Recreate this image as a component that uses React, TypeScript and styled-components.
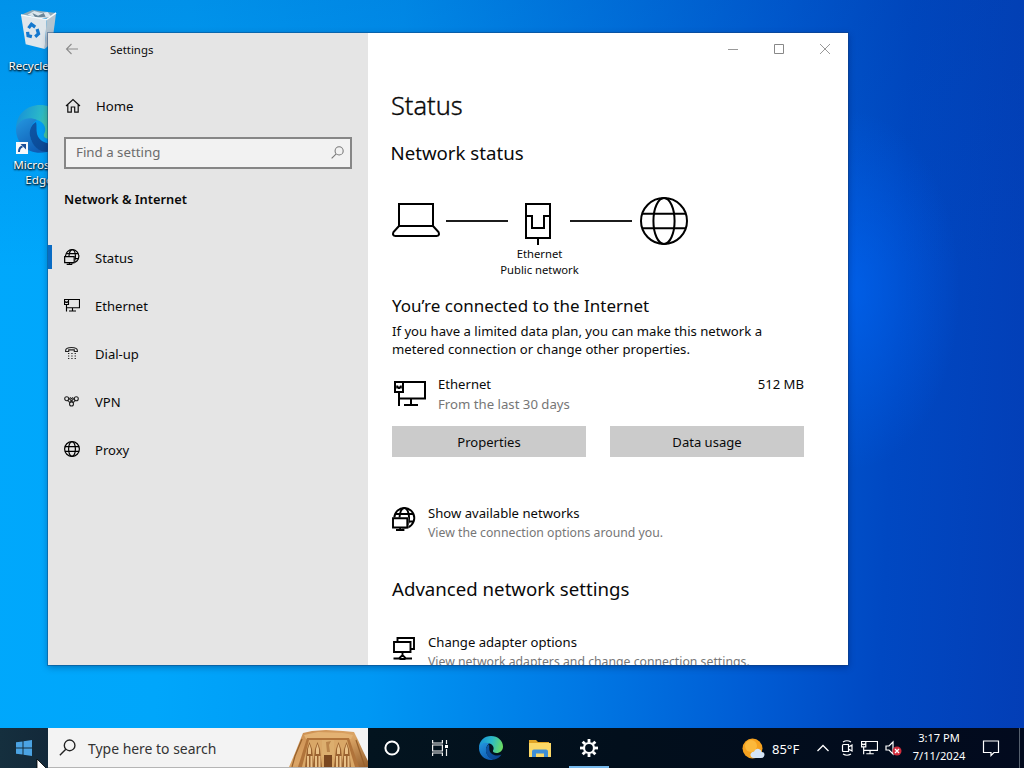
import React from 'react';
import styled, { createGlobalStyle } from 'styled-components';

const GlobalStyle = createGlobalStyle`
  * { box-sizing: border-box; }
  html, body { margin: 0; height: 100%; overflow: hidden; }
  body { font-family: "Noto Sans", "Open Sans", sans-serif; color: #0a0a0a; }
  svg { display: block; flex: none; }
`;

const Desktop = styled.div`
  position: relative;
  width: 1024px;
  height: 768px;
  overflow: hidden;
  display: flex;
  flex-direction: column;
  background:
    radial-gradient(ellipse 110px 180px at 850px 290px, rgba(0, 104, 250, 0.6), rgba(0, 90, 230, 0) 100%),
    linear-gradient(to bottom, rgba(0, 60, 160, 0.2), rgba(0, 60, 160, 0) 35%),
    linear-gradient(93deg, #00a8fc 0%, #00a6fb 18%, #0098f4 38%, #0078e4 58%, #005cd4 74%, #0048c2 86%, #033eb6 100%);
`;

const DesktopIcons = styled.div`
  flex: 1;
  display: flex;
  flex-direction: column;
  align-items: flex-start;
  padding: 8px 0 0 1px;
`;

const Shortcut = styled.div<{ $height: number }>`
  width: 76px;
  height: ${(p) => p.$height}px;
  display: flex;
  flex-direction: column;
  align-items: center;
`;

const ShortcutLabel = styled.div<{ $gap: number }>`
  margin-top: ${(p) => p.$gap}px;
  font-size: 11.6px;
  line-height: 15px;
  text-align: center;
  color: #fff;
  text-shadow: 0 1px 2px #000, 1px 1px 2px rgba(0, 0, 0, 0.8);
`;

const Window = styled.main`
  position: absolute;
  left: 48px;
  top: 33px;
  width: 800px;
  height: 632px;
  display: grid;
  grid-template-columns: 320px 480px;
  overflow: hidden;
  background: #fff;
  box-shadow: 0 0 0 1px rgba(20, 60, 110, 0.4), 0 2px 7px 0 rgba(0, 10, 50, 0.35);
`;

const Sidebar = styled.aside`
  background: #e5e5e5;
  display: flex;
  flex-direction: column;
`;

const SideTitle = styled.div`
  height: 32px;
  display: flex;
  align-items: center;
  padding: 1px 0 0 17px;
  gap: 31px;
  font-size: 11.4px;
`;

const HomeLink = styled.div`
  margin-top: 29px;
  height: 24px;
  display: flex;
  align-items: center;
  padding-left: 17px;
  gap: 15px;
  font-size: 13.2px;
  svg { margin-top: -1px; }
`;

const SearchField = styled.div`
  margin: 19px 16px 0;
  height: 32px;
  border: 2px solid #868686;
  background: #f2f2f2;
  color: #6c6c6c;
  display: flex;
  align-items: center;
  justify-content: space-between;
  padding: 0 6px 2px 10px;
  font-size: 13.3px;
`;

const SideHeading = styled.h2`
  margin: 20px 0 25px 16px;
  font-size: 12.85px;
  line-height: 20px;
  font-weight: 600;
`;

const NavItem = styled.div<{ $active?: boolean }>`
  height: 48px;
  display: flex;
  align-items: center;
  padding-left: 12px;
  gap: 15px;
  font-size: 13.05px;
  &::before {
    content: '';
    width: 4px;
    height: 24px;
    margin: -2px -15px 0 -12px;
    background: ${(p) => (p.$active ? '#0a6cc4' : 'transparent')};
  }
  svg { margin: -2px 0 0 12px; }
`;

const Content = styled.section`
  display: flex;
  flex-direction: column;
`;

const Controls = styled.div`
  height: 32px;
  flex: none;
  display: flex;
  justify-content: flex-end;
`;

const ControlButton = styled.div`
  width: 46px;
  display: flex;
  align-items: center;
  justify-content: center;
`;

const Body = styled.div`
  width: 412px;
  margin-left: 24px;
  display: flex;
  flex-direction: column;
`;

const Title = styled.h1`
  margin: 24px 0 0 -1px;
  font-size: 25.4px;
  line-height: 32px;
  font-weight: 300;
  -webkit-text-stroke: 0.35px #0a0a0a;
`;

const Heading = styled.h2<{ $top: number; $shift?: number }>`
  margin: ${(p) => p.$top}px 0 0 ${(p) => p.$shift ?? 0}px;
  font-size: 18.65px;
  line-height: 26px;
  font-weight: 400;
`;

const Diagram = styled.div`
  margin-top: 30px;
  height: 50px;
  display: flex;
  align-items: center;
`;

const Wire = styled.div<{ $left: number; $right: number }>`
  width: 62px;
  height: 2px;
  background: #1c1c1c;
  margin: 0 ${(p) => p.$right}px 0 ${(p) => p.$left}px;
`;

const DiagramLabel = styled.div`
  width: 295px;
  text-align: center;
  font-size: 11.25px;
  line-height: 16px;
`;

const Connected = styled.h3`
  margin: 16px 0 4px;
  font-size: 17px;
  line-height: 24px;
  font-weight: 400;
`;

const Paragraph = styled.p`
  margin: 0;
  font-size: 13.15px;
  line-height: 18px;
  white-space: nowrap;
`;

const UsageRow = styled.div`
  margin-top: 16px;
  height: 40px;
  display: flex;
  font-size: 13.1px;
  line-height: 20px;
  svg { margin: 7px 12px 0 2px; }
`;

const Stack = styled.div`
  flex: 1;
  white-space: nowrap;
`;

const Muted = styled.div<{ $small?: boolean }>`
  color: #767676;
  font-size: ${(p) => (p.$small ? '12.25px' : '13.2px')};
  line-height: 20px;
`;

const Buttons = styled.div`
  margin-top: 12px;
  display: grid;
  grid-template-columns: 194px 194px;
  gap: 24px;
`;

const Button = styled.div`
  height: 31px;
  background: #cbcbcb;
  display: flex;
  align-items: center;
  justify-content: center;
  padding-top: 1px;
  font-size: 13.05px;
`;

const LinkRow = styled.div<{ $top: number }>`
  margin-top: ${(p) => p.$top}px;
  height: 40px;
  display: flex;
  gap: 12px;
  font-size: 13.12px;
  line-height: 20px;
  svg { margin-top: 4px; }
`;

const Taskbar = styled.footer`
  height: 40px;
  flex: none;
  display: flex;
  color: #fff;
  background: linear-gradient(90deg, #152f3e 0, #13293a 48px, #03141f 368px, #020f1c 620px, #020a1e 1024px);
`;

const TaskButton = styled.div<{ $shift?: number; $active?: boolean }>`
  width: 48px;
  height: 40px;
  margin-left: ${(p) => p.$shift ?? 0}px;
  display: flex;
  align-items: center;
  justify-content: center;
  background: ${(p) => (p.$active ? 'linear-gradient(#76b9ed, #76b9ed) center bottom / 40px 2px no-repeat' : 'none')};
`;

const TaskSearch = styled.div`
  width: 320px;
  background: #f3f3f3;
  border-bottom: 1px solid #b5b5b5;
  color: #333;
  display: flex;
  align-items: center;
  padding-left: 11px;
  font-size: 13.95px;
  span { flex: 1; margin-left: 12px; padding-top: 2px; }
`;

const Tray = styled.div`
  margin-left: auto;
  display: flex;
  align-items: center;
`;

const Weather = styled.div`
  display: flex;
  align-items: center;
  gap: 7px;
  width: 75px;
  font-size: 13px;
  padding-top: 1px;
`;

const TrayIcons = styled.div`
  display: flex;
  align-items: center;
  gap: 7px;
  width: 94px;
  svg:first-child { margin-right: 4px; }
`;

const Clock = styled.div`
  width: 56px;
  text-align: center;
  font-size: 11.1px;
  line-height: 18px;
  padding-bottom: 2px;
`;

const ShowDesktop = styled.div`
  width: 5px;
  height: 40px;
  margin-left: 4px;
  border-left: 1px solid #56606e;
`;

const Cursor = styled.svg`
  position: absolute;
  left: 36px;
  top: 759px;
`;

const GlobeIcon = ({ size, stroke }: { size: number; stroke: number }) => {
  const c = size / 2;
  const r = c - stroke / 2;
  const dy = r * 0.31;
  const dx = Math.sqrt(r * r - dy * dy);
  return (
    <svg width={size} height={size} fill="none" stroke="#000" strokeWidth={stroke}>
      <circle cx={c} cy={c} r={r} />
      <ellipse cx={c} cy={c} rx={r * 0.46} ry={r} />
      <path d={`M${c - dx} ${c - dy}H${c + dx}M${c - dx} ${c + dy}H${c + dx}`} />
    </svg>
  );
};

const GlobeMonitorIcon = ({ size, stroke, fill }: { size: number; stroke: number; fill: string }) => (
  <svg width={size} height={size} viewBox="0 0 24 24" fill="none" stroke="#000" strokeWidth={stroke}>
    <circle cx="12.3" cy="11" r="10" />
    <ellipse cx="12.3" cy="11" rx="4.8" ry="10" />
    <path d="M3.300 7H21.300M14 14.500H21.800" />
    <path d="M0 10.500H16.300V21.500H10V24H0Z" fill={fill} stroke="none" />
    <path d="M1 11.300H15.300V20.500H1ZM8.200 20.500V23M4 23H12.400" />
  </svg>
);

const EthernetIcon = ({ width, stroke, color = '#000' }: { width: number; stroke: number; color?: string }) => (
  <svg width={width} height={(width * 26) / 32} viewBox="0 0 32 26" fill="none" stroke={color} strokeWidth={stroke}>
    <path d="M9 1H31V17.500H5M1 1H9V11H1ZM5 11V25M17 17.500V24M10 24H24M3.200 4.500V6.500H6.800V4.500M5 6.500V8" />
  </svg>
);

const LoupeIcon = ({ size, stroke, color }: { size: number; stroke: number; color: string }) => (
  <svg width={size} height={size} viewBox="0 0 16 16" fill="none" stroke={color} strokeWidth={stroke}>
    <circle cx="10" cy="6" r="5" />
    <path d="M6.400 9.600L0.800 15.200" />
  </svg>
);

const EdgeLogo = ({ size, id }: { size: number; id: string }) => (
  <svg width={size} height={size} viewBox="0 0 48 48">
    <defs>
      <linearGradient id={`${id}a`} x1="0" y1="0.3" x2="1" y2="0.5">
        <stop offset="0" stopColor="#1791d8" />
        <stop offset="0.5" stopColor="#2bb9c8" />
        <stop offset="1" stopColor="#6bdc62" />
      </linearGradient>
      <linearGradient id={`${id}b`} x1="0" y1="0" x2="0.6" y2="1">
        <stop offset="0" stopColor="#2497e0" />
        <stop offset="1" stopColor="#0f5cb4" />
      </linearGradient>
      <linearGradient id={`${id}c`} x1="0" y1="0" x2="1" y2="1">
        <stop offset="0" stopColor="#0d57a8" />
        <stop offset="1" stopColor="#0a438c" />
      </linearGradient>
    </defs>
    <path d="M0 24C0 9 11 0 24 0C38 0 48 10 48 21C48 29 42 34 35 34C30 34 27 32 28 29C31 25 29 17 21 15C12 13 3 18 0 24Z" fill={`url(#${id}a)`} />
    <path d="M0 24C2 14 13 11 21 15C17 17 14 22 14 28C14 38 22 46 31 47C14 51 0 40 0 24Z" fill={`url(#${id}b)`} />
    <path d="M20 17C15 20 13 25 14 31C16 41 23 47 31 47C37 46 42 42 45 37C37 41 24 39 21 29C20 25 21 20 20 17Z" fill={`url(#${id}c)`} />
  </svg>
);

const RecycleBin = () => (
  <svg width="38" height="44" viewBox="0 0 40 46">
    <path d="M1.500 7L13 2L38 5L35 12Z" fill="#8faab8" />
    <path d="M8 7L15 3L22 5L29 4L33 9L20 11Z" fill="#dce7ee" />
    <path d="M13 5L19 8L25 5L27 9L16 10Z" fill="#6a8698" />
    <path d="M1 7L28 12L26 43L6 38Z" fill="#dfe6eb" />
    <path d="M28 12L38 5L34 36L26 43Z" fill="#b4c4cf" />
    <path d="M1 7L28 12L38 5" fill="none" stroke="#f6fafc" strokeWidth="1.400" />
    <g fill="none" stroke="#1478cf" strokeWidth="3.400">
      <path d="M9 21L12 17L16 20" />
      <path d="M18 22L19.500 27L16 30" />
      <path d="M12.500 30L8.500 29L8 25" />
    </g>
  </svg>
);

const EdgeShortcut = () => (
  <svg width="50" height="50" viewBox="0 0 50 50">
    <g transform="translate(2 0)">
      <EdgeLogo size={48} id="desk" />
    </g>
    <rect x="2" y="37" width="12" height="12" fill="#f7f9fb" />
    <path d="M5 47C5 43.500 6 42 8.500 41.500" stroke="#1b4f98" strokeWidth="2" fill="none" />
    <path d="M6.500 39H12V44.500Z" fill="#1b4f98" />
  </svg>
);

const Temple = () => (
  <svg width="80" height="39" viewBox="0 0 80 39">
    <defs>
      <linearGradient id="rock" x1="0" y1="0" x2="1" y2="1">
        <stop offset="0" stopColor="#c98b4e" />
        <stop offset="0.5" stopColor="#dba566" />
        <stop offset="1" stopColor="#96602e" />
      </linearGradient>
    </defs>
    <path d="M1 39L7 25L11 15L15 5L24 3L38 2L55 3L66 4L70 12L75 23L80 33V39Z" fill="url(#rock)" />
    <path d="M16 7L30 4L55 5L65 7L63 11H18Z" fill="#e3b273" />
    <path d="M19 10H61L71 39H10Z" fill="#b0733a" />
    <path d="M21 12H59L67 39H14Z" fill="#d9a767" />
    <path d="M34 12H46V29H34Z" fill="#dcae6e" />
    <path d="M38 14L43 13L41 17L42 24H39Z" fill="#b9834a" />
    <path d="M36 27H44V39H36Z" fill="#7a4720" />
    {[19, 27, 48, 56].map((x) => (
      <g key={x}>
        <path d={`M${x + 2.5} 14L${x + 5} 21L${x + 6} 30L${x + 7} 39H${x - 2}L${x - 1} 30L${x} 21Z`} fill="#9a6230" />
        <path d={`M${x + 2.5} 16L${x + 4} 21V26H${x + 1}V21ZM${x} 28H${x + 2}V39H${x}ZM${x + 3.5} 28H${x + 5.5}V39H${x + 3.5}Z`} fill="#e9c086" />
      </g>
    ))}
    <path d="M14 11L7 28L4 39M68 12L73 27L77 39" fill="none" stroke="#96602c" strokeWidth="1.200" />
  </svg>
);

const nav = [
  { label: 'Status', icon: <GlobeMonitorIcon size={16} stroke={1.8} fill="#e5e5e5" />, active: true },
  { label: 'Ethernet', icon: <EthernetIcon width={16} stroke={2.3} /> },
  {
    label: 'Dial-up',
    icon: (
      <svg width="16" height="16" fill="none" stroke="#222" strokeWidth="1.100">
        <path d="M1.600 5.700C1.600 1.500 13.400 1.500 13.400 5.700V6.500H10.300V4.900H4.700V6.500H1.600Z" />
        <path d="M4 8.500H12M4 11H12M4 13.500H12" strokeDasharray="1.300 2" />
      </svg>
    ),
  },
  {
    label: 'VPN',
    icon: (
      <svg width="16" height="16" fill="none" stroke="#222" strokeWidth="1.100">
        <circle cx="2.700" cy="5.700" r="2" />
        <circle cx="12.300" cy="5.700" r="2" />
        <circle cx="7.500" cy="11" r="2" />
        <path d="M4.500 4.800L9 9.500M10.500 4.800L6 9.500M4 7.500L6 9.800M11 7.500L9 9.800M6 4.300L7.500 5.800L9 4.300" />
      </svg>
    ),
  },
  { label: 'Proxy', icon: <GlobeIcon size={16} stroke={1.2} /> },
];

export default function App() {
  return (
    <Desktop>
      <GlobalStyle />
      <DesktopIcons>
        <Shortcut $height={97}>
          <RecycleBin />
          <ShortcutLabel $gap={6}>Recycle Bin</ShortcutLabel>
        </Shortcut>
        <Shortcut $height={90}>
          <EdgeShortcut />
          <ShortcutLabel $gap={2}>Microsoft<br />Edge</ShortcutLabel>
        </Shortcut>
      </DesktopIcons>

      <Window>
        <Sidebar>
          <SideTitle>
            <svg width="14" height="14" fill="none" stroke="#8c8c8c" strokeWidth="1.100">
              <path d="M13 6H1.500M6.500 1L1.500 6L6.500 11" />
            </svg>
            Settings
          </SideTitle>
          <HomeLink>
            <svg width="16" height="16" fill="none" stroke="#111" strokeWidth="1.200">
              <path d="M1 8L8 1.500L15 8M2.800 6.500V14.200H6.300V9H9.700V14.200H13.200V6.500" />
            </svg>
            Home
          </HomeLink>
          <SearchField>
            Find a setting
            <LoupeIcon size={13} stroke={1.3} color="#777" />
          </SearchField>
          <SideHeading>Network &amp; Internet</SideHeading>
          {nav.map((n) => (
            <NavItem key={n.label} $active={n.active}>
              {n.icon}
              {n.label}
            </NavItem>
          ))}
        </Sidebar>

        <Content>
          <Controls>
            <ControlButton>
              <svg width="12" height="12" stroke="#999" fill="none"><path d="M1 6.500H11" /></svg>
            </ControlButton>
            <ControlButton>
              <svg width="12" height="12" stroke="#888" fill="none"><path d="M1.500 1.500H10.500V10.500H1.500Z" /></svg>
            </ControlButton>
            <ControlButton>
              <svg width="12" height="12" stroke="#999" fill="none"><path d="M1 1L11 11M11 1L1 11" /></svg>
            </ControlButton>
          </Controls>
          <Body>
            <Title>Status</Title>
            <Heading $top={19} $shift={-1.5}>Network status</Heading>
            <Diagram>
              <svg width="48" height="50" fill="none" stroke="#000" strokeWidth="2">
                <path d="M7 8H41V30H7ZM7 30L1.500 36C0.500 38.500 1 40 3.500 40H44.500C47 40 47.500 38.500 46.500 36L41 30" />
              </svg>
              <Wire $left={6} $right={16} />
              <svg width="28" height="50" fill="none" stroke="#000" strokeWidth="2">
                <path d="M2 8H26V42H2ZM2 20H8V32H20V20H26M14 42V49" />
              </svg>
              <Wire $left={18} $right={8} />
              <GlobeIcon size={48} stroke={2} />
            </Diagram>
            <DiagramLabel>Ethernet<br />Public network</DiagramLabel>
            <Connected>You’re connected to the Internet</Connected>
            <Paragraph>
              If you have a limited data plan, you can make this network a<br />
              metered connection or change other properties.
            </Paragraph>
            <UsageRow>
              <EthernetIcon width={32} stroke={2} />
              <Stack>
                Ethernet
                <Muted>From the last 30 days</Muted>
              </Stack>
              <span>512 MB</span>
            </UsageRow>
            <Buttons>
              <Button>Properties</Button>
              <Button>Data usage</Button>
            </Buttons>
            <LinkRow $top={46}>
              <GlobeMonitorIcon size={24} stroke={1.9} fill="#fff" />
              <Stack>
                Show available networks
                <Muted $small>View the connection options around you.</Muted>
              </Stack>
            </LinkRow>
            <Heading $top={33}>Advanced network settings</Heading>
            <LinkRow $top={30}>
              <svg width="24" height="24" fill="none" stroke="#000" strokeWidth="1.900">
                <path d="M2 6H18.500V16H2ZM5.500 6V2H22V13H18.500M10.500 16V19M1.500 22.500H7.500M13.500 22.500H20M7 22.500L10.500 19L14 22.500L12.500 23H8.500Z" />
              </svg>
              <Stack>
                Change adapter options
                <Muted $small>View network adapters and change connection settings.</Muted>
              </Stack>
            </LinkRow>
          </Body>
        </Content>
      </Window>

      <Taskbar>
        <TaskButton>
          <svg width="16" height="16" fill="#4ba3e3">
            <path d="M0 2.300L6.500 1.400V7.500H0ZM7.500 1.200L16 0V7.500H7.500ZM0 8.500H6.500V14.600L0 13.700ZM7.500 8.500H16V16L7.500 14.800Z" />
          </svg>
        </TaskButton>
        <TaskSearch>
          <LoupeIcon size={17} stroke={1.3} color="#222" />
          <span>Type here to search</span>
          <Temple />
        </TaskSearch>
        <TaskButton>
          <svg width="16" height="16" fill="none" stroke="#fff" strokeWidth="2"><circle cx="8" cy="8" r="6.600" /></svg>
        </TaskButton>
        <TaskButton>
          <svg width="18" height="16" fill="none" stroke="#eee" strokeWidth="1.200">
            <path d="M1.600 0V3H11.400V0M1.600 16V13H11.400V16M1.600 5H11.400V11H1.600ZM15.500 0V4M15.500 9V16" />
            <path d="M14 5H17V8H14Z" fill="#fff" stroke="none" />
          </svg>
        </TaskButton>
        <TaskButton $shift={3}><EdgeLogo size={24} id="bar" /></TaskButton>
        <TaskButton $shift={1}>
          <svg width="22" height="18">
            <path d="M0 1H7L9 3H20V6H0Z" fill="#e0a526" />
            <path d="M0 4H22V18H0Z" fill="#fbd867" />
            <path d="M3 18V12.500Q3 10.500 5 10.500H17Q19 10.500 19 12.500V18H15V14.500H7V18Z" fill="#3f8fd6" />
          </svg>
        </TaskButton>
        <TaskButton $shift={1} $active>
          <svg width="18" height="18" fill="none" stroke="#fff">
            <circle cx="9" cy="9" r="5" strokeWidth="2.200" />
            {[0, 45, 90, 135, 180, 225, 270, 315].map((a) => (
              <path key={a} d="M9 0V3.500" strokeWidth="2.800" transform={`rotate(${a} 9 9)`} />
            ))}
          </svg>
        </TaskButton>
        <Tray>
          <Weather>
            <svg width="23" height="22">
              <circle cx="10.500" cy="10.500" r="10" fill="#f5a11f" />
              <circle cx="9" cy="8" r="6" fill="#fbb93c" />
              <path d="M12 20Q8 19.500 8.500 16Q9.500 13.500 12 13.500Q13.500 10 17 11Q19.500 12 19.500 14Q22.500 14 22.500 17Q22 20 19 20Z" fill="#d5e4f6" />
            </svg>
            85°F
          </Weather>
          <TrayIcons>
            <svg width="12" height="12" fill="none" stroke="#fff" strokeWidth="1.300"><path d="M0.500 9L6 3.500L11.500 9" /></svg>
            <svg width="14" height="16" fill="none" stroke="#fff" strokeWidth="1.200">
              <path d="M2.500 5.500Q2.500 4.500 3.500 4.500H8.500V11.500H3.500Q2.500 11.500 2.500 10.500ZM8.500 7L12 5V11L8.500 9M3 2Q7 -0.500 11 2M3 14Q7 16.500 11 14" />
            </svg>
            <EthernetIcon width={17} stroke={2.2} color="#fff" />
            <svg width="18" height="16">
              <path d="M1 6H4L8 2V14L4 10H1Z" fill="none" stroke="#fff" strokeWidth="1.200" />
              <circle cx="12" cy="11" r="4.500" fill="#d02c3c" />
              <path d="M10 9L14 13M14 9L10 13" stroke="#fff" strokeWidth="1.300" />
            </svg>
          </TrayIcons>
          <Clock>3:17 PM<br />7/11/2024</Clock>
          <TaskButton>
            <svg width="18" height="18" fill="none" stroke="#fff" strokeWidth="1.200">
              <path d="M1.500 2H16.500V13.500H12L9 16.500L9 13.500H1.500Z" />
            </svg>
          </TaskButton>
          <ShowDesktop />
        </Tray>
      </Taskbar>
      <Cursor width="16" height="20" viewBox="0 0 16 20">
        <path d="M1 0V17L5 13L8 20L11 18.500L8 12H13Z" fill="#fff" stroke="#000" strokeWidth="0.800" />
      </Cursor>
    </Desktop>
  );
}
